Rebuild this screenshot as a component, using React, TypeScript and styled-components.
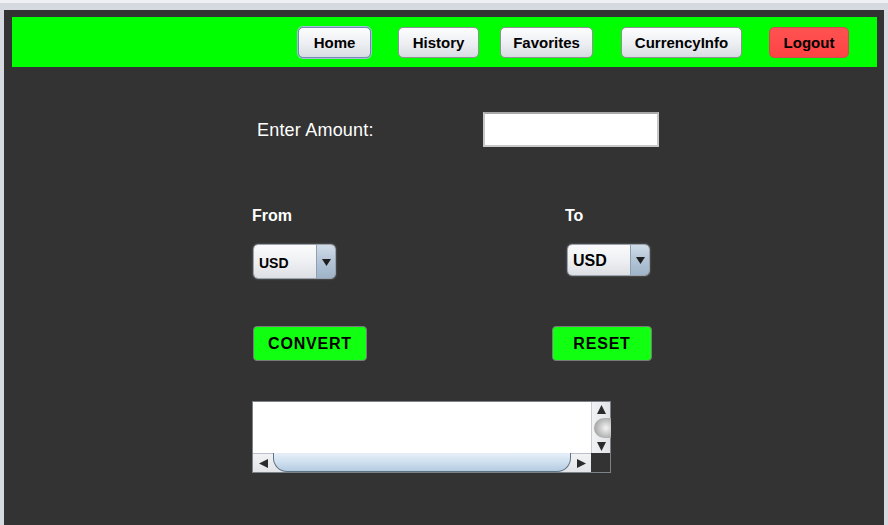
import styled, { createGlobalStyle } from "styled-components";

const GlobalStyle = createGlobalStyle`
  html, body {
    margin: 0;
    padding: 0;
    background: #d6d9df;
  }
  * {
    box-sizing: border-box;
  }
`;

const Window = styled.div`
  width: 888px;
  height: 525px;
  border-top: 3px solid #eef0f3;
  padding: 7px 4px 0 4px;
  background: #d6d9df;
  font-family: "Liberation Sans", Arial, sans-serif;
`;

const Panel = styled.div`
  height: 100%;
  background: #333333;
  padding: 7px 7px 0 8px;
`;

const NavBar = styled.nav`
  height: 50px;
  background: #00ff00;
  display: flex;
  align-items: center;
  justify-content: flex-end;
  padding-right: 28px;
`;

const NavButton = styled.button<{ $w: number; $ml: number; $active?: boolean; $danger?: boolean }>`
  width: ${(p) => p.$w}px;
  height: 31px;
  margin-left: ${(p) => p.$ml}px;
  border-radius: 5px;
  border: 1px solid ${(p) => (p.$active ? "#7189b4" : p.$danger ? "#c85050" : "#8f9195")};
  box-shadow: ${(p) => (p.$active ? "0 0 0 1px #a9bcdc" : "none")};
  background: ${(p) =>
    p.$danger
      ? "linear-gradient(#ff5252, #ff4343)"
      : "linear-gradient(#fdfdfe 0%, #eceef2 55%, #d8dbe1 100%)"};
  font-family: "Liberation Sans", Arial, sans-serif;
  font-weight: bold;
  font-size: 15px;
  color: #000;
  padding: 0;
`;

const Content = styled.div`
  padding-left: 240px;
`;

const Row = styled.div<{ $mt: number }>`
  display: flex;
  align-items: flex-start;
  margin-top: ${(p) => p.$mt}px;
`;

const AmountLabel = styled.label`
  width: 226px;
  margin-left: 5px;
  margin-top: 9px;
  font-size: 18px;
  line-height: 18px;
  color: #ffffff;
  letter-spacing: 0.2px;
`;

const AmountInput = styled.input`
  width: 176px;
  height: 35px;
  border: 2px solid #c8c8c8;
  border-top-color: #a8a8a8;
  background: #ffffff;
  outline: none;
`;

const FieldLabel = styled.div<{ $w?: number }>`
  width: ${(p) => (p.$w ? `${p.$w}px` : "auto")};
  font-size: 16px;
  line-height: 16px;
  font-weight: bold;
  color: #ffffff;
`;

const Combo = styled.div<{ $h: number; $ml: number }>`
  width: 83px;
  height: ${(p) => p.$h}px;
  margin-left: ${(p) => p.$ml}px;
  display: flex;
  border-radius: 5px;
  border: 1px solid #9aa2ad;
  box-shadow: 0 0 2px rgba(255, 255, 255, 0.35);
  overflow: hidden;
`;

const ComboText = styled.div<{ $fs: number }>`
  flex: 1;
  display: flex;
  align-items: center;
  padding-left: 5px;
  padding-top: 2px;
  font-size: ${(p) => p.$fs}px;
  font-weight: bold;
  color: #000;
  background: linear-gradient(#fbfbfc 0%, #eff0f3 50%, #dcdfe4 100%);
`;

const ComboArrow = styled.div`
  width: 19px;
  display: flex;
  align-items: center;
  justify-content: center;
  border-left: 1px solid #8e9fb3;
  background: linear-gradient(#d1dce8 0%, #b3c4d6 50%, #9fb4c9 100%);
`;

const ActionButton = styled.button<{ $w: number; $ml: number }>`
  width: ${(p) => p.$w}px;
  height: 35px;
  margin-left: ${(p) => p.$ml}px;
  border-radius: 4px;
  border: 1px solid #7a7a7a;
  background: #11ff11;
  font-family: "Liberation Sans", Arial, sans-serif;
  font-weight: bold;
  font-size: 16px;
  letter-spacing: 0.8px;
  color: #000;
  padding: 0;
`;

const ScrollPane = styled.div`
  width: 359px;
  height: 72px;
  border: 1px solid #7d8188;
  display: grid;
  grid-template-columns: 1fr 19px;
  grid-template-rows: 1fr 19px;
  background: #ffffff;
`;

const TextArea = styled.div`
  background: #ffffff;
`;

const VScroll = styled.div`
  display: flex;
  flex-direction: column;
  align-items: center;
  justify-content: space-between;
  padding: 3px 0 2px;
  background: linear-gradient(90deg, #f1f2f4, #e2e4e8);
  border-left: 1px solid #c9ccd1;
`;

const VThumb = styled.div`
  width: 17px;
  height: 20px;
  margin-left: 2px;
  border-radius: 10px 0 0 10px;
  background: radial-gradient(circle at 70% 50%, #f4f4f4 0%, #c4c4c4 45%, #8d8d8d 100%);
`;

const HScroll = styled.div`
  display: flex;
  align-items: center;
  background: linear-gradient(#f1f2f4, #e2e4e8);
  border-top: 1px solid #b9c2cc;
`;

const HThumb = styled.div`
  flex: 1;
  height: 19px;
  margin-top: -2px;
  border: 1px solid #5f7286;
  border-top: none;
  border-radius: 0 0 14px 14px / 0 0 14px 14px;
  background: linear-gradient(#e6eff8 0%, #cfe0ef 50%, #b4cbe0 100%);
`;

const ArrowBox = styled.div`
  width: 20px;
  display: flex;
  align-items: center;
  justify-content: center;
`;

const Corner = styled.div`
  background: #333333;
`;

const Tri = ({ dir, size = 8 }: { dir: "up" | "down" | "left" | "right"; size?: number }) => {
  const pts = {
    up: "0,8 4,0 8,8",
    down: "0,0 8,0 4,8",
    left: "8,0 8,8 0,4",
    right: "0,0 0,8 8,4",
  }[dir];
  return (
    <svg width={size} height={size} viewBox="0 0 8 8">
      <polygon points={pts} fill="#2b2b2b" />
    </svg>
  );
};

const ComboBox = ({ h, fs, ml }: { h: number; fs: number; ml: number }) => (
  <Combo $h={h} $ml={ml}>
    <ComboText $fs={fs}>USD</ComboText>
    <ComboArrow>
      <svg width="9" height="8" viewBox="0 0 9 8">
        <polygon points="0,1 9,1 4.5,8" fill="#1f1f1f" />
      </svg>
    </ComboArrow>
  </Combo>
);

export default function App() {
  return (
    <>
      <GlobalStyle />
      <Window>
        <Panel>
          <NavBar>
            <NavButton $w={73} $ml={0} $active>Home</NavButton>
            <NavButton $w={81} $ml={27}>History</NavButton>
            <NavButton $w={93} $ml={21}>Favorites</NavButton>
            <NavButton $w={121} $ml={28}>CurrencyInfo</NavButton>
            <NavButton $w={80} $ml={27} $danger>Logout</NavButton>
          </NavBar>

          <Content>
            <Row $mt={45}>
              <AmountLabel>Enter Amount:</AmountLabel>
              <AmountInput type="text" />
            </Row>

            <Row $mt={61}>
              <FieldLabel $w={313}>From</FieldLabel>
              <FieldLabel>To</FieldLabel>
            </Row>

            <Row $mt={20}>
              <ComboBox h={35} fs={14} ml={1} />
              <ComboBox h={32} fs={16} ml={231} />
            </Row>

            <Row $mt={47}>
              <ActionButton $w={114} $ml={1}>CONVERT</ActionButton>
              <ActionButton $w={100} $ml={185}>RESET</ActionButton>
            </Row>

            <Row $mt={40}>
              <ScrollPane>
                <TextArea />
                <VScroll>
                  <Tri dir="up" size={9} />
                  <VThumb />
                  <Tri dir="down" size={9} />
                </VScroll>
                <HScroll>
                  <ArrowBox>
                    <Tri dir="left" size={9} />
                  </ArrowBox>
                  <HThumb />
                  <ArrowBox>
                    <Tri dir="right" size={9} />
                  </ArrowBox>
                </HScroll>
                <Corner />
              </ScrollPane>
            </Row>
          </Content>
        </Panel>
      </Window>
    </>
  );
}
